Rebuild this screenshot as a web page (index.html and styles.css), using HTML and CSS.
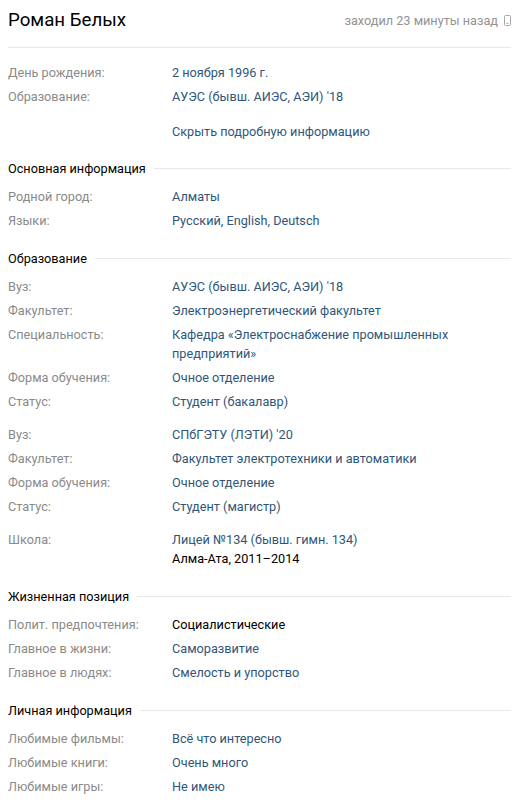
FILE: index.html
```html
<!DOCTYPE html>
<html>
<head>
    <meta charset="utf-8">
    <link rel="stylesheet" href="styles.css">
</head>
<body>

    <div class="page_top">
        <h1 class="page_name">Роман Белых</h1>
        <div class="online">заходил 23 минуты назад
            <svg class="mobile_icon" width="7" height="11" viewBox="0 0 7 11">
                <rect x="0.5" y="0.5" width="6" height="10" rx="1" fill="none" stroke="#a8a8a8"/>
                <line x1="2.5" y1="8.5" x2="4.5" y2="8.5" stroke="#a8a8a8"/>
            </svg>
        </div>
    </div>

    <div class="short_info">
        <div class="row"><div class="label">День рождения:</div><div class="labeled">2 ноября 1996 г.</div></div>
        <div class="row"><div class="label">Образование:</div><div class="labeled">АУЭС (бывш. АИЭС, АЭИ) '18</div></div>
        <div class="more_link">Скрыть подробную информацию</div>
    </div>

    <div class="section">
        <div class="section_title">Основная информация</div>
        <div class="row"><div class="label">Родной город:</div><div class="labeled">Алматы</div></div>
        <div class="row"><div class="label">Языки:</div><div class="labeled">Русский, English, Deutsch</div></div>
    </div>

    <div class="section">
        <div class="section_title">Образование</div>
        <div class="group">
            <div class="row"><div class="label">Вуз:</div><div class="labeled">АУЭС (бывш. АИЭС, АЭИ) '18</div></div>
            <div class="row"><div class="label">Факультет:</div><div class="labeled">Электроэнергетический факультет</div></div>
            <div class="row"><div class="label">Специальность:</div><div class="labeled">Кафедра «Электроснабжение промышленных предприятий»</div></div>
            <div class="row"><div class="label">Форма обучения:</div><div class="labeled">Очное отделение</div></div>
            <div class="row"><div class="label">Статус:</div><div class="labeled">Студент (бакалавр)</div></div>
        </div>
        <div class="group">
            <div class="row"><div class="label">Вуз:</div><div class="labeled">СПбГЭТУ (ЛЭТИ) '20</div></div>
            <div class="row"><div class="label">Факультет:</div><div class="labeled">Факультет электротехники и автоматики</div></div>
            <div class="row"><div class="label">Форма обучения:</div><div class="labeled">Очное отделение</div></div>
            <div class="row"><div class="label">Статус:</div><div class="labeled">Студент (магистр)</div></div>
        </div>
        <div class="group">
            <div class="row"><div class="label">Школа:</div><div class="labeled">Лицей №134 (бывш. гимн. 134)<div class="plain">Алма-Ата, 2011–2014</div></div></div>
        </div>
    </div>

    <div class="section">
        <div class="section_title">Жизненная позиция</div>
        <div class="row"><div class="label">Полит. предпочтения:</div><div class="labeled plain">Социалистические</div></div>
        <div class="row"><div class="label">Главное в жизни:</div><div class="labeled">Саморазвитие</div></div>
        <div class="row"><div class="label">Главное в людях:</div><div class="labeled">Смелость и упорство</div></div>
    </div>

    <div class="section">
        <div class="section_title">Личная информация</div>
        <div class="row"><div class="label">Любимые фильмы:</div><div class="labeled">Всё что интересно</div></div>
        <div class="row"><div class="label">Любимые книги:</div><div class="labeled">Очень много</div></div>
        <div class="row"><div class="label">Любимые игры:</div><div class="labeled">Не имею</div></div>
    </div>

</body>
</html>
```

FILE: styles.css
```css
body {
    margin: 0;
    padding: 0 19px 0 8px;
    background: #fff;
    font-family: Roboto, "Open Sans", sans-serif;
    font-size: 12.7px;
    color: #000;
}
.page_top {
    display: flex;
    justify-content: space-between;
    align-items: center;
    padding: 7px 0 14px;
    border-bottom: 1px solid #e7e8ec;
}
.page_name {
    margin: 0;
    font-size: 18.7px;
    font-weight: normal;
    line-height: 26px;
}
.online {
    display: flex;
    align-items: center;
    gap: 6px;
    color: #939393;
}
.short_info {
    padding-top: 10px;
}
.row {
    display: flex;
    margin-top: 5px;
    line-height: 19px;
}
.label {
    width: 164px;
    flex-shrink: 0;
    color: #8a8a8a;
}
.labeled {
    color: #2f5679;
    max-width: 300px;
}
.plain {
    color: #000;
}
.more_link {
    margin-top: 16px;
    padding-left: 164px;
    line-height: 19px;
    color: #2f5679;
}
.section {
    margin-top: 19px;
}
.short_info + .section {
    margin-top: 18px;
}
.section_title {
    display: flex;
    align-items: center;
    gap: 8px;
    line-height: 19px;
    margin-bottom: 4px;
}
.section_title::after {
    content: "";
    flex: 1;
    height: 1px;
    background: #e7e8ec;
}
.section_title + .row,
.section_title + .group > .row:first-child {
    margin-top: 9px;
}
.group + .group {
    margin-top: 14px;
}
```
